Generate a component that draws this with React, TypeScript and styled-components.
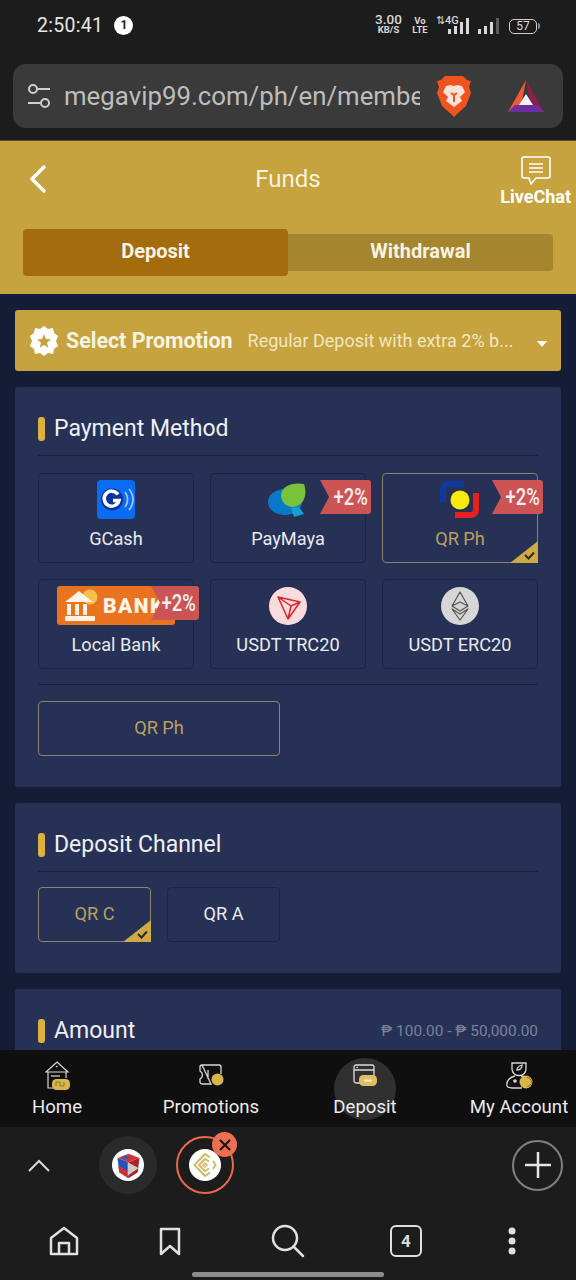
import * as React from 'react';
import styled, { createGlobalStyle } from 'styled-components';

const GlobalStyle = createGlobalStyle`
	html, body {
		margin: 0;
		padding: 0;
		background: #1c1c1c;
	}
	* {
		box-sizing: border-box;
	}
`;

const Page = styled.div`
	width: 576px;
	height: 1280px;
	display: flex;
	flex-direction: column;
	overflow: hidden;
	background: #1c1c1c;
	font-family: Roboto, "Liberation Sans", sans-serif;
	color: #fff;
`;

const StatusBar = styled.div`
	height: 50px;
	display: flex;
	align-items: center;
	padding: 0 38px 0 37px;
	flex-shrink: 0;
`;

const Time = styled.div`
	font-size: 19.5px;
	color: #e6e6e6;
	letter-spacing: 0.3px;
`;

const NoticeDot = styled.div`
	width: 19px;
	height: 19px;
	margin-left: 11px;
	border-radius: 50%;
	background: #fff;
	color: #1c1c1c;
	font-size: 12px;
	font-weight: 700;
	display: flex;
	align-items: center;
	justify-content: center;
`;

const StatusRight = styled.div`
	margin-left: auto;
	display: flex;
	align-items: flex-end;
	height: 18px;
	color: #d8d8d8;
`;

const Speed = styled.div`
	width: 27px;
	display: flex;
	flex-direction: column;
	align-items: center;
	font-size: 13.5px;
	line-height: 13px;
	font-weight: 500;
	white-space: nowrap;

	small {
		font-size: 9.5px;
		line-height: 8px;
		font-weight: 700;
	}
`;

const VoLte = styled.div`
	width: 20px;
	margin-left: 8px;
	display: flex;
	flex-direction: column;
	align-items: center;
	font-size: 9.5px;
	line-height: 9px;
	font-weight: 700;
	white-space: nowrap;
`;

const SignalGroup = styled.div<{ $first?: boolean }>`
	position: relative;
	display: flex;
	margin-left: ${(p) => (p.$first ? '6px' : '9px')};
`;

const NetLabel = styled.div`
	position: absolute;
	top: -1px;
	left: 0;
	font-size: 11px;
	line-height: 10px;
	font-weight: 500;
	white-space: nowrap;
`;

const Battery = styled.div`
	position: relative;
	width: 28px;
	height: 15px;
	margin-left: 10px;
	margin-right: 1px;
	border: 1.5px solid #d0d0d0;
	border-radius: 5px;
	font-size: 12px;
	line-height: 12px;
	text-align: center;

	&::after {
		content: '';
		position: absolute;
		top: 3px;
		right: -4px;
		width: 2px;
		height: 6px;
		border-radius: 0 2px 2px 0;
		background: #8a8a8a;
	}
`;

const UrlWrap = styled.div`
	padding: 14px 13px 12px;
	flex-shrink: 0;
`;

const UrlBar = styled.div`
	height: 64px;
	border-radius: 13px;
	background: #3a3a3a;
	display: flex;
	align-items: center;
	padding: 0 19px 0 14px;
`;

const UrlText = styled.div`
	width: 356px;
	margin-left: 13px;
	overflow: hidden;
	white-space: nowrap;
	font-size: 25.8px;
	color: #bdbdbd;
`;

const BraveSlot = styled.div`
	margin-left: 16px;
	display: flex;
`;

const BatSlot = styled.div`
	margin-left: auto;
	display: flex;
`;

const Header = styled.div`
	flex-shrink: 0;
	background: #c6a33f;
	padding: 0 23px 18px;
	border-top: 1px solid #5a4c24;
`;

const HeaderTop = styled.div`
	height: 76px;
	display: grid;
	grid-template-columns: 1fr auto 1fr;
	align-items: center;
`;

const BackButton = styled.div`
	display: flex;
	padding-left: 6px;
`;

const Title = styled.div`
	font-size: 24px;
	color: #f7f1de;
`;

const LiveChat = styled.div`
	justify-self: end;
	margin: 5px -18px 0 0;
	display: flex;
	flex-direction: column;
	align-items: center;
	font-size: 18px;
	font-weight: 700;
	line-height: 21px;
`;

const Tabs = styled.div`
	margin-top: 12px;
	display: flex;
	align-items: center;
`;

const Tab = styled.div<{ $active?: boolean }>`
	flex: 1;
	height: ${(p) => (p.$active ? '47px' : '37px')};
	padding-bottom: 3px;
	display: flex;
	align-items: center;
	justify-content: center;
	font-size: 20px;
	font-weight: 700;
	color: #f8f3e2;
	background: ${(p) => (p.$active ? '#a46c0c' : '#a5862f')};
	border-radius: ${(p) => (p.$active ? '4px' : '0 4px 4px 0')};
`;

const Main = styled.div`
	flex: 1;
	min-height: 0;
	overflow: hidden;
	background: #151c35;
	padding: 16px 15px 0;
	display: flex;
	flex-direction: column;
	gap: 16px;
`;

const Promo = styled.div`
	height: 61px;
	flex-shrink: 0;
	border-radius: 3px;
	background: #c6a33f;
	display: flex;
	align-items: center;
	padding: 0 14px 0 15px;
`;

const PromoTitle = styled.div`
	margin-left: 8px;
	font-size: 21.4px;
	font-weight: 700;
	color: #f8f3e2;
	white-space: nowrap;
`;

const PromoText = styled.div`
	margin-left: 15px;
	font-size: 18px;
	color: #f1e6c2;
	white-space: nowrap;
`;

const Caret = styled.div`
	margin-left: auto;
	width: 0;
	height: 0;
	border-left: 5.5px solid transparent;
	border-right: 5.5px solid transparent;
	border-top: 6px solid #fff;
	transform: translateY(3px);
`;

const Card = styled.div`
	flex-shrink: 0;
	background: #273055;
	border-radius: 3px;
	padding: 24px 23px 31px;
`;

const SectionHead = styled.div`
	height: 45px;
	padding-bottom: 8px;
	border-bottom: 1px solid #1b2342;
	display: flex;
	align-items: center;
`;

const SectionMark = styled.div`
	width: 7px;
	height: 24px;
	margin-right: 9px;
	border-radius: 3px;
	background: #dcb13f;
`;

const SectionTitle = styled.div`
	margin-bottom: 2px;
	font-size: 23px;
	color: #eef0f6;
`;

const Range = styled.div`
	margin-left: auto;
	font-size: 15.4px;
	color: #79819a;
`;

const MethodGrid = styled.div`
	margin-top: 17px;
	display: grid;
	grid-template-columns: repeat(3, 156px);
	grid-auto-rows: 90px;
	column-gap: 16px;
	row-gap: 16px;
	padding-bottom: 15px;
	border-bottom: 1px solid #1b2342;
`;

const Tile = styled.div<{ $selected?: boolean }>`
	position: relative;
	border-radius: 4px;
	border: 1px solid ${(p) => (p.$selected ? '#8c8468' : '#1c2445')};
	display: flex;
	flex-direction: column;
	align-items: center;
	padding-top: 6px;
	font-size: 18.2px;
	color: ${(p) => (p.$selected ? '#b9a05f' : '#e8eaf0')};
`;

const TileIcon = styled.div`
	height: 39px;
	display: flex;
	align-items: center;
	justify-content: center;
`;

const TileLabel = styled.div`
	margin-top: 9px;
`;

const Bonus = styled.div<{ $plain?: boolean }>`
	position: absolute;
	top: 6px;
	right: -6px;
	width: ${(p) => (p.$plain ? '48px' : '51px')};
	height: 34px;
	background: #cc5454;
	border-radius: 0 3px 3px 0;
	clip-path: polygon(0 0, 100% 0, 100% 100%, 0 100%, 9px 50%);
	display: flex;
	align-items: center;
	justify-content: flex-end;
	padding-right: 3px;
	color: #f8eeee;
`;

const BonusText = styled.span`
	display: inline-block;
	font-size: 23px;
	font-weight: 500;
	transform: scaleX(0.8);
	transform-origin: right center;
`;

const Corner = styled.div`
	position: absolute;
	right: -1px;
	bottom: -1px;
	width: 28px;
	height: 22px;
	background: #cfa943;
	clip-path: polygon(100% 0, 100% 100%, 0 100%);
	display: flex;
	align-items: flex-end;
	justify-content: flex-end;
	padding: 0 3px 3px 0;
`;

const OptionRow = styled.div<{ $afterGrid?: boolean }>`
	margin-top: ${(p) => (p.$afterGrid ? '16px' : '15px')};
	display: flex;
	gap: 16px;
`;

const OptionButton = styled.div<{ $wide?: boolean; $selected?: boolean }>`
	position: relative;
	width: ${(p) => (p.$wide ? '242px' : '113px')};
	height: 55px;
	border-radius: 4px;
	border: 1px solid ${(p) => (p.$selected ? '#8c8468' : '#1c2445')};
	padding-bottom: 2px;
	display: flex;
	align-items: center;
	justify-content: center;
	font-size: 18.2px;
	color: ${(p) => (p.$selected ? '#b9a05f' : '#e8eaf0')};
`;

const AmountCard = styled(Card)`
	height: 200px;
`;

const AppNav = styled.div`
	height: 77px;
	flex-shrink: 0;
	background: #0f0f0f;
	display: grid;
	grid-template-columns: repeat(4, 154px);
	justify-content: center;
`;

const NavItem = styled.div`
	position: relative;
	display: flex;
	flex-direction: column;
	align-items: center;
	padding-top: 9px;
	font-size: 18.6px;
	color: #ececec;
`;

const NavIcon = styled.div`
	height: 32px;
	display: flex;
	align-items: center;
	justify-content: center;
	margin-bottom: 5px;
`;

const NavHighlight = styled.div`
	position: absolute;
	top: 8px;
	left: 46px;
	width: 62px;
	height: 62px;
	border-radius: 50%;
	background: rgba(255, 255, 255, 0.14);
`;

const TabStrip = styled.div`
	height: 76px;
	flex-shrink: 0;
	display: flex;
	align-items: center;
	padding: 0 13px 0 28px;
`;

const StripChevron = styled.div`
	display: flex;
	margin-right: 49px;
`;

const SiteTab = styled.div<{ $current?: boolean }>`
	position: relative;
	width: 58px;
	height: 58px;
	margin-right: 19px;
	border-radius: 50%;
	background: ${(p) => (p.$current ? 'transparent' : '#2a2a2a')};
	border: ${(p) => (p.$current ? '2.5px solid #e9694a' : 'none')};
	display: flex;
	align-items: center;
	justify-content: center;
`;

const SiteDisc = styled.div`
	width: 32px;
	height: 32px;
	border-radius: 50%;
	background: #fff;
	display: flex;
	align-items: center;
	justify-content: center;
	overflow: hidden;
`;

const CloseBadge = styled.div`
	position: absolute;
	top: -6px;
	right: -5px;
	width: 25px;
	height: 25px;
	border-radius: 50%;
	background: #ee6f50;
	display: flex;
	align-items: center;
	justify-content: center;
`;

const PlusButton = styled.div`
	margin-left: auto;
	width: 51px;
	height: 51px;
	border-radius: 50%;
	border: 2.5px solid #808080;
	display: flex;
	align-items: center;
	justify-content: center;
`;

const Toolbar = styled.div`
	height: 69px;
	flex-shrink: 0;
	padding-top: 7px;
	display: grid;
	grid-template-columns: 112px 100px 136px 100px 112px;
	justify-content: center;
	align-items: center;
`;

const ToolSlot = styled.div`
	display: flex;
	justify-content: center;
	align-items: center;
`;

const TabCount = styled.div`
	width: 32px;
	height: 32px;
	border: 2.5px solid #e0e0e0;
	border-radius: 6px;
	display: flex;
	align-items: center;
	justify-content: center;
	font-size: 17px;
	font-weight: 700;
	color: #dcdcdc;
`;

const HomeBar = styled.div`
	width: 192px;
	height: 5px;
	margin: 0 auto 3px;
	border-radius: 3px;
	background: #8c8c8c;
	flex-shrink: 0;
`;

const Sliders = () => (
	<svg width="24" height="26" viewBox="0 0 24 26" fill="none" stroke="#cfcfcf" strokeWidth="2">
		<circle cx="6" cy="6" r="4" />
		<path d="M11 6h12" />
		<circle cx="18" cy="20" r="4" />
		<path d="M1 20h12" />
	</svg>
);

const BraveLogo = () => (
	<svg width="36" height="42" viewBox="0 0 36 42">
		<path d="M9 1h18l4 4 4 1-2 6 2 6-5 13-9 8-3 3-3-3-9-8-5-13 2-6-2-6 4-1z" fill="#f0531e" />
		<path d="M10 11l5-1 3 1 3-1 5 1 3 6-5 5 2 4-8 6-8-6 2-4-5-5z" fill="#fbe3d8" />
		<path d="M15 18l3 2 3-2M18 20v7" stroke="#f0531e" strokeWidth="2" fill="none" />
	</svg>
);

const BatLogo = () => (
	<svg width="36" height="32" viewBox="0 0 36 32">
		<path d="M18 0L0 32h12z" fill="#ef5a36" />
		<path d="M18 0l18 32H24z" fill="#8a1f4c" />
		<path d="M0 32l7-7h22l7 7z" fill="#6b2fa0" />
		<path d="M18 14l7 11H11z" fill="#f5f0f5" />
	</svg>
);

const SignalBars = ({ heights, dimLast }: { heights: number[]; dimLast?: boolean }) => (
	<svg width={heights.length * 6 - 3} height="17" viewBox={`0 0 ${heights.length * 6 - 3} 17`} fill="#d8d8d8">
		{heights.map((h, idx) =>
			<rect
				key={idx}
				x={idx * 6}
				y={17 - h}
				width="3"
				height={h}
				opacity={dimLast && idx === heights.length - 1 ? 0.35 : 1}
			/>
		)}
	</svg>
);

const BackIcon = () => (
	<svg width="18" height="30" viewBox="0 0 18 30" fill="none" stroke="#fff" strokeWidth="3.5" strokeLinecap="round" strokeLinejoin="round">
		<path d="M15 3L3 15l12 12" />
	</svg>
);

const ChatIcon = () => (
	<svg width="30" height="30" viewBox="0 0 30 30" fill="none" stroke="#fff" strokeWidth="1.6" strokeLinejoin="round">
		<path d="M3 1h24a2 2 0 0 1 2 2v17a2 2 0 0 1-2 2H15l-5 6-2-6H3a2 2 0 0 1-2-2V3a2 2 0 0 1 2-2z" />
		<path d="M8 8h14M8 12h14M8 16h14" />
	</svg>
);

const PromoBadge = () => (
	<svg width="28" height="30" viewBox="0 0 28 30">
		<path d="M14 0l4 3 5-1 1 5 4 3-2 5 2 5-4 3-1 5-5-1-4 3-4-3-5 1-1-5-4-3 2-5-2-5 4-3 1-5 5 1z" fill="#fff" />
		<path d="M14 8l2 5 5 .4-4 3.300 1.300 5L14 19l-4.300 2.700 1.300-5-4-3.300 5-.4z" fill="#c6a33f" />
	</svg>
);

const GcashIcon = () => (
	<svg width="38" height="39" viewBox="0 0 38 39">
		<rect width="38" height="39" rx="4" fill="#0a6cf0" />
		<circle cx="15" cy="19.500" r="11" fill="#08349c" />
		<path d="M21 14.500a7.500 7.500 0 1 0 1 6h-6" fill="none" stroke="#fff" strokeWidth="3.500" />
		<path d="M28 12a12 12 0 0 1 0 15M32 9a16 16 0 0 1 0 21" fill="none" stroke="#9cc6ff" strokeWidth="1.800" />
	</svg>
);

const MayaIcon = () => (
	<svg width="40" height="34" viewBox="0 0 40 34">
		<ellipse cx="17" cy="19" rx="17" ry="13" fill="#0a78c8" />
		<path d="M13 12C14 3 24-1 36 1c4 12-1 22-11 23C18 24 13 19 13 12z" fill="#78c23c" />
		<path d="M26 34l10-3-5-7-8 1z" fill="#0fa0d8" />
	</svg>
);

const QrPhIcon = () => (
	<svg width="40" height="39" viewBox="0 0 40 39" fill="none">
		<path d="M24 4H8a5 5 0 0 0-5 5v13" stroke="#10399e" strokeWidth="6" />
		<circle cx="20" cy="20" r="9.500" fill="#f8ec0c" />
		<path d="M36 13v17a5 5 0 0 1-5 5H15" stroke="#e6201f" strokeWidth="6" />
	</svg>
);

const BankIcon = () => (
	<svg width="118" height="39" viewBox="0 0 118 39">
		<rect width="118" height="39" rx="3" fill="#ea7320" />
		<circle cx="33" cy="11" r="7.500" fill="#f4c04e" />
		<path d="M8 16l14-11 14 11z" fill="#fdf3e6" />
		<rect x="10" y="18" width="4" height="11" fill="#fdf3e6" />
		<rect x="18" y="18" width="4" height="11" fill="#fdf3e6" />
		<rect x="26" y="18" width="4" height="11" fill="#fdf3e6" />
		<rect x="8" y="30" width="30" height="5" rx="1" fill="#fdf3e6" />
		<text x="46" y="27" fontFamily="Roboto, sans-serif" fontWeight="900" fontSize="21" letterSpacing="1.500" fill="#fdf3e6">BANK</text>
	</svg>
);

const TronIcon = () => (
	<svg width="38" height="38" viewBox="0 0 38 38">
		<circle cx="19" cy="19" r="19" fill="#fbdcdc" />
		<path d="M9 10l22 5-12 17zM9 10l10 22 3-13zM9 10l13 9 9-4" fill="none" stroke="#e0222c" strokeWidth="1.500" strokeLinejoin="round" />
	</svg>
);

const EthIcon = () => (
	<svg width="38" height="38" viewBox="0 0 38 38">
		<circle cx="19" cy="19" r="19" fill="#d6d6d6" />
		<path d="M19 5l-8 14 8 5 8-5zM11 19l8-4 8 4M11 22l8 11 8-11-8 5z" fill="none" stroke="#555" strokeWidth="1.200" strokeLinejoin="round" />
	</svg>
);

const Tick = () => (
	<svg width="11" height="9" viewBox="0 0 11 9" fill="none" stroke="#2b2a22" strokeWidth="2">
		<path d="M1 4l3.500 3.500L10 1.500" />
	</svg>
);

const HomeNavIcon = () => (
	<svg width="25" height="29" viewBox="0 0 25 29" fill="none" stroke="#d8d8d8" strokeWidth="1.200">
		<path d="M1 11L12 1l11 10zM3 11v16h6M21 11v6M11 6l1.500-1" />
		<path d="M6 15h9" />
		<rect x="7" y="18" width="18" height="11" rx="4.500" fill="#d9b44a" stroke="none" />
		<path d="M11 25v-4h4v4h4v-4" stroke="#8a7430" strokeWidth="1" />
	</svg>
);

const PromoNavIcon = () => (
	<svg width="26" height="22" viewBox="0 0 26 22" fill="none" stroke="#d8d8d8" strokeWidth="1.300">
		<path d="M4 1h17a2 2 0 0 1 2 2v7M13 20H4a2 2 0 0 1-2-2v-3a4.500 4.500 0 0 0 0-8V3a2 2 0 0 1 2-2zM10 6v9" />
		<circle cx="19.500" cy="15.500" r="6" fill="#d9b44a" stroke="none" />
	</svg>
);

const DepositNavIcon = () => (
	<svg width="24" height="22" viewBox="0 0 24 22" fill="none" stroke="#d8d8d8" strokeWidth="1.300">
		<rect x="1" y="1" width="20" height="18" rx="2" />
		<path d="M1 6h20M3.500 3.500h1.500" />
		<rect x="6" y="11" width="18" height="11" rx="4.500" fill="#d9b44a" stroke="none" />
		<path d="M11 16.500h8" stroke="#f4e8bd" strokeWidth="2" />
	</svg>
);

const AccountNavIcon = () => (
	<svg width="27" height="28" viewBox="0 0 27 28" fill="none" stroke="#d8d8d8" strokeWidth="1.300">
		<path d="M6 2h14v6a6.500 6.500 0 0 1-7 6.500A6.500 6.500 0 0 1 6 8zM11 9c0-3 2-4 5-5 0 3-1 5-5 5z" />
		<path d="M9 15c-5 1-9 5-8 10 1 2 3 2 5 2h10M15 15l6 1" />
		<circle cx="9" cy="20" r="1.800" fill="#d8d8d8" stroke="none" />
		<circle cx="20" cy="21" r="6.500" fill="#d9b44a" stroke="none" />
		<path d="M21 16.500a4.500 4.500 0 0 1 0 9" stroke="#8a7430" strokeWidth="1" />
	</svg>
);

const ChevronUp = () => (
	<svg width="22" height="13" viewBox="0 0 22 13" fill="none" stroke="#d8d8d8" strokeWidth="2">
		<path d="M1 12L11 2l10 10" />
	</svg>
);

const BlockSite = () => (
	<svg width="27" height="27" viewBox="0 0 32 32">
		<path d="M3 7l13-5 13 5-13 5z" fill="#d9303a" />
		<path d="M8 5l6-1 3 3-6 2z" fill="#2b5cc0" />
		<path d="M3 7l13 5v19L5 24z" fill="#1f55b8" />
		<path d="M4 16l12 7v8L5 24z" fill="#cf2e36" />
		<path d="M29 7l-13 5v19l11-7z" fill="#a8232b" />
		<path d="M15 12l13 7-13 9z" fill="#cfcabd" />
	</svg>
);

const GoldSite = () => (
	<svg width="24" height="24" viewBox="0 0 24 24" fill="none" stroke="#d6b965" strokeWidth="2">
		<path d="M17 4.500L12 1 1.500 12 12 23l5-3.500" />
		<path d="M20 8l2.500 4-2.500 4" />
		<path d="M16 8.500L12 6l-6 6 6 6 4-2.500" />
		<path d="M12 10l-2 2 2 2 2-2z" strokeWidth="1.500" />
	</svg>
);

const CloseIcon = () => (
	<svg width="12" height="12" viewBox="0 0 12 12" stroke="#1a1a1a" strokeWidth="2.200">
		<path d="M1 1l10 10M11 1L1 11" />
	</svg>
);

const PlusIcon = () => (
	<svg width="26" height="26" viewBox="0 0 26 26" stroke="#e6e6e6" strokeWidth="2.500">
		<path d="M13 0v26M0 13h26" />
	</svg>
);

const HomeTool = () => (
	<svg width="30" height="30" viewBox="0 0 30 30" fill="none" stroke="#e0e0e0" strokeWidth="2.500" strokeLinejoin="round">
		<path d="M2 12L15 2l13 10v16H2zM10 28V17h10v11" />
	</svg>
);

const BookmarkTool = () => (
	<svg width="22" height="29" viewBox="0 0 22 29" fill="none" stroke="#e0e0e0" strokeWidth="2.500" strokeLinejoin="round">
		<path d="M2 2h18v25l-9-8-9 8z" />
	</svg>
);

const SearchTool = () => (
	<svg width="34" height="34" viewBox="0 0 34 34" fill="none" stroke="#e0e0e0" strokeWidth="2.500" strokeLinecap="round">
		<circle cx="14" cy="14" r="12" />
		<path d="M23 23l9 9" />
	</svg>
);

const DotsTool = () => (
	<svg width="8" height="28" viewBox="0 0 8 28" fill="#e0e0e0">
		<circle cx="4" cy="4" r="3.500" />
		<circle cx="4" cy="14" r="3.500" />
		<circle cx="4" cy="24" r="3.500" />
	</svg>
);

const methods = [
	{ label: 'GCash', icon: <GcashIcon /> },
	{ label: 'PayMaya', icon: <MayaIcon />, bonus: true },
	{ label: 'QR Ph', icon: <QrPhIcon />, bonus: true, selected: true },
	{ label: 'Local Bank', icon: <BankIcon />, bonus: true, plain: true },
	{ label: 'USDT TRC20', icon: <TronIcon /> },
	{ label: 'USDT ERC20', icon: <EthIcon /> },
];

const navItems = [
	{ label: 'Home', icon: <HomeNavIcon /> },
	{ label: 'Promotions', icon: <PromoNavIcon /> },
	{ label: 'Deposit', icon: <DepositNavIcon />, active: true },
	{ label: 'My Account', icon: <AccountNavIcon /> },
];

const App = () => (
	<Page>
		<GlobalStyle />
		<StatusBar>
			<Time>2:50:41</Time>
			<NoticeDot>1</NoticeDot>
			<StatusRight>
				<Speed>3.00<small>KB/S</small></Speed>
				<VoLte><span>Vo</span><span>LTE</span></VoLte>
				<SignalGroup $first>
					<NetLabel>⇅4G</NetLabel>
					<SignalBars heights={[0, 0, 5, 8, 12, 16]} />
				</SignalGroup>
				<SignalGroup>
					<SignalBars heights={[5, 8, 12, 16]} dimLast />
				</SignalGroup>
				<Battery>57</Battery>
			</StatusRight>
		</StatusBar>
		<UrlWrap>
			<UrlBar>
				<Sliders />
				<UrlText>megavip99.com/ph/en/membe</UrlText>
				<BraveSlot><BraveLogo /></BraveSlot>
				<BatSlot><BatLogo /></BatSlot>
			</UrlBar>
		</UrlWrap>
		<Header>
			<HeaderTop>
				<BackButton><BackIcon /></BackButton>
				<Title>Funds</Title>
				<LiveChat>
					<ChatIcon />
					LiveChat
				</LiveChat>
			</HeaderTop>
			<Tabs>
				<Tab $active>Deposit</Tab>
				<Tab>Withdrawal</Tab>
			</Tabs>
		</Header>
		<Main>
			<Promo>
				<PromoBadge />
				<PromoTitle>Select Promotion</PromoTitle>
				<PromoText>Regular Deposit with extra 2% b...</PromoText>
				<Caret />
			</Promo>
			<Card>
				<SectionHead>
					<SectionMark />
					<SectionTitle>Payment Method</SectionTitle>
				</SectionHead>
				<MethodGrid>
					{methods.map((item) =>
						<Tile key={item.label} $selected={item.selected}>
							<TileIcon>{item.icon}</TileIcon>
							<TileLabel>{item.label}</TileLabel>
							{item.bonus && <Bonus $plain={item.plain}><BonusText>+2%</BonusText></Bonus>}
							{item.selected && <Corner><Tick /></Corner>}
						</Tile>
					)}
				</MethodGrid>
				<OptionRow $afterGrid>
					<OptionButton $wide $selected>QR Ph</OptionButton>
				</OptionRow>
			</Card>
			<Card>
				<SectionHead>
					<SectionMark />
					<SectionTitle>Deposit Channel</SectionTitle>
				</SectionHead>
				<OptionRow>
					<OptionButton $selected>
						QR C
						<Corner><Tick /></Corner>
					</OptionButton>
					<OptionButton>QR A</OptionButton>
				</OptionRow>
			</Card>
			<AmountCard>
				<SectionHead>
					<SectionMark />
					<SectionTitle>Amount</SectionTitle>
					<Range>₱ 100.00 - ₱ 50,000.00</Range>
				</SectionHead>
			</AmountCard>
		</Main>
		<AppNav>
			{navItems.map((item) =>
				<NavItem key={item.label}>
					{item.active && <NavHighlight />}
					<NavIcon>{item.icon}</NavIcon>
					{item.label}
				</NavItem>
			)}
		</AppNav>
		<TabStrip>
			<StripChevron><ChevronUp /></StripChevron>
			<SiteTab><SiteDisc><BlockSite /></SiteDisc></SiteTab>
			<SiteTab $current>
				<SiteDisc><GoldSite /></SiteDisc>
				<CloseBadge><CloseIcon /></CloseBadge>
			</SiteTab>
			<PlusButton><PlusIcon /></PlusButton>
		</TabStrip>
		<Toolbar>
			<ToolSlot><HomeTool /></ToolSlot>
			<ToolSlot><BookmarkTool /></ToolSlot>
			<ToolSlot><SearchTool /></ToolSlot>
			<ToolSlot><TabCount>4</TabCount></ToolSlot>
			<ToolSlot><DotsTool /></ToolSlot>
		</Toolbar>
		<HomeBar />
	</Page>
);

export default App;
